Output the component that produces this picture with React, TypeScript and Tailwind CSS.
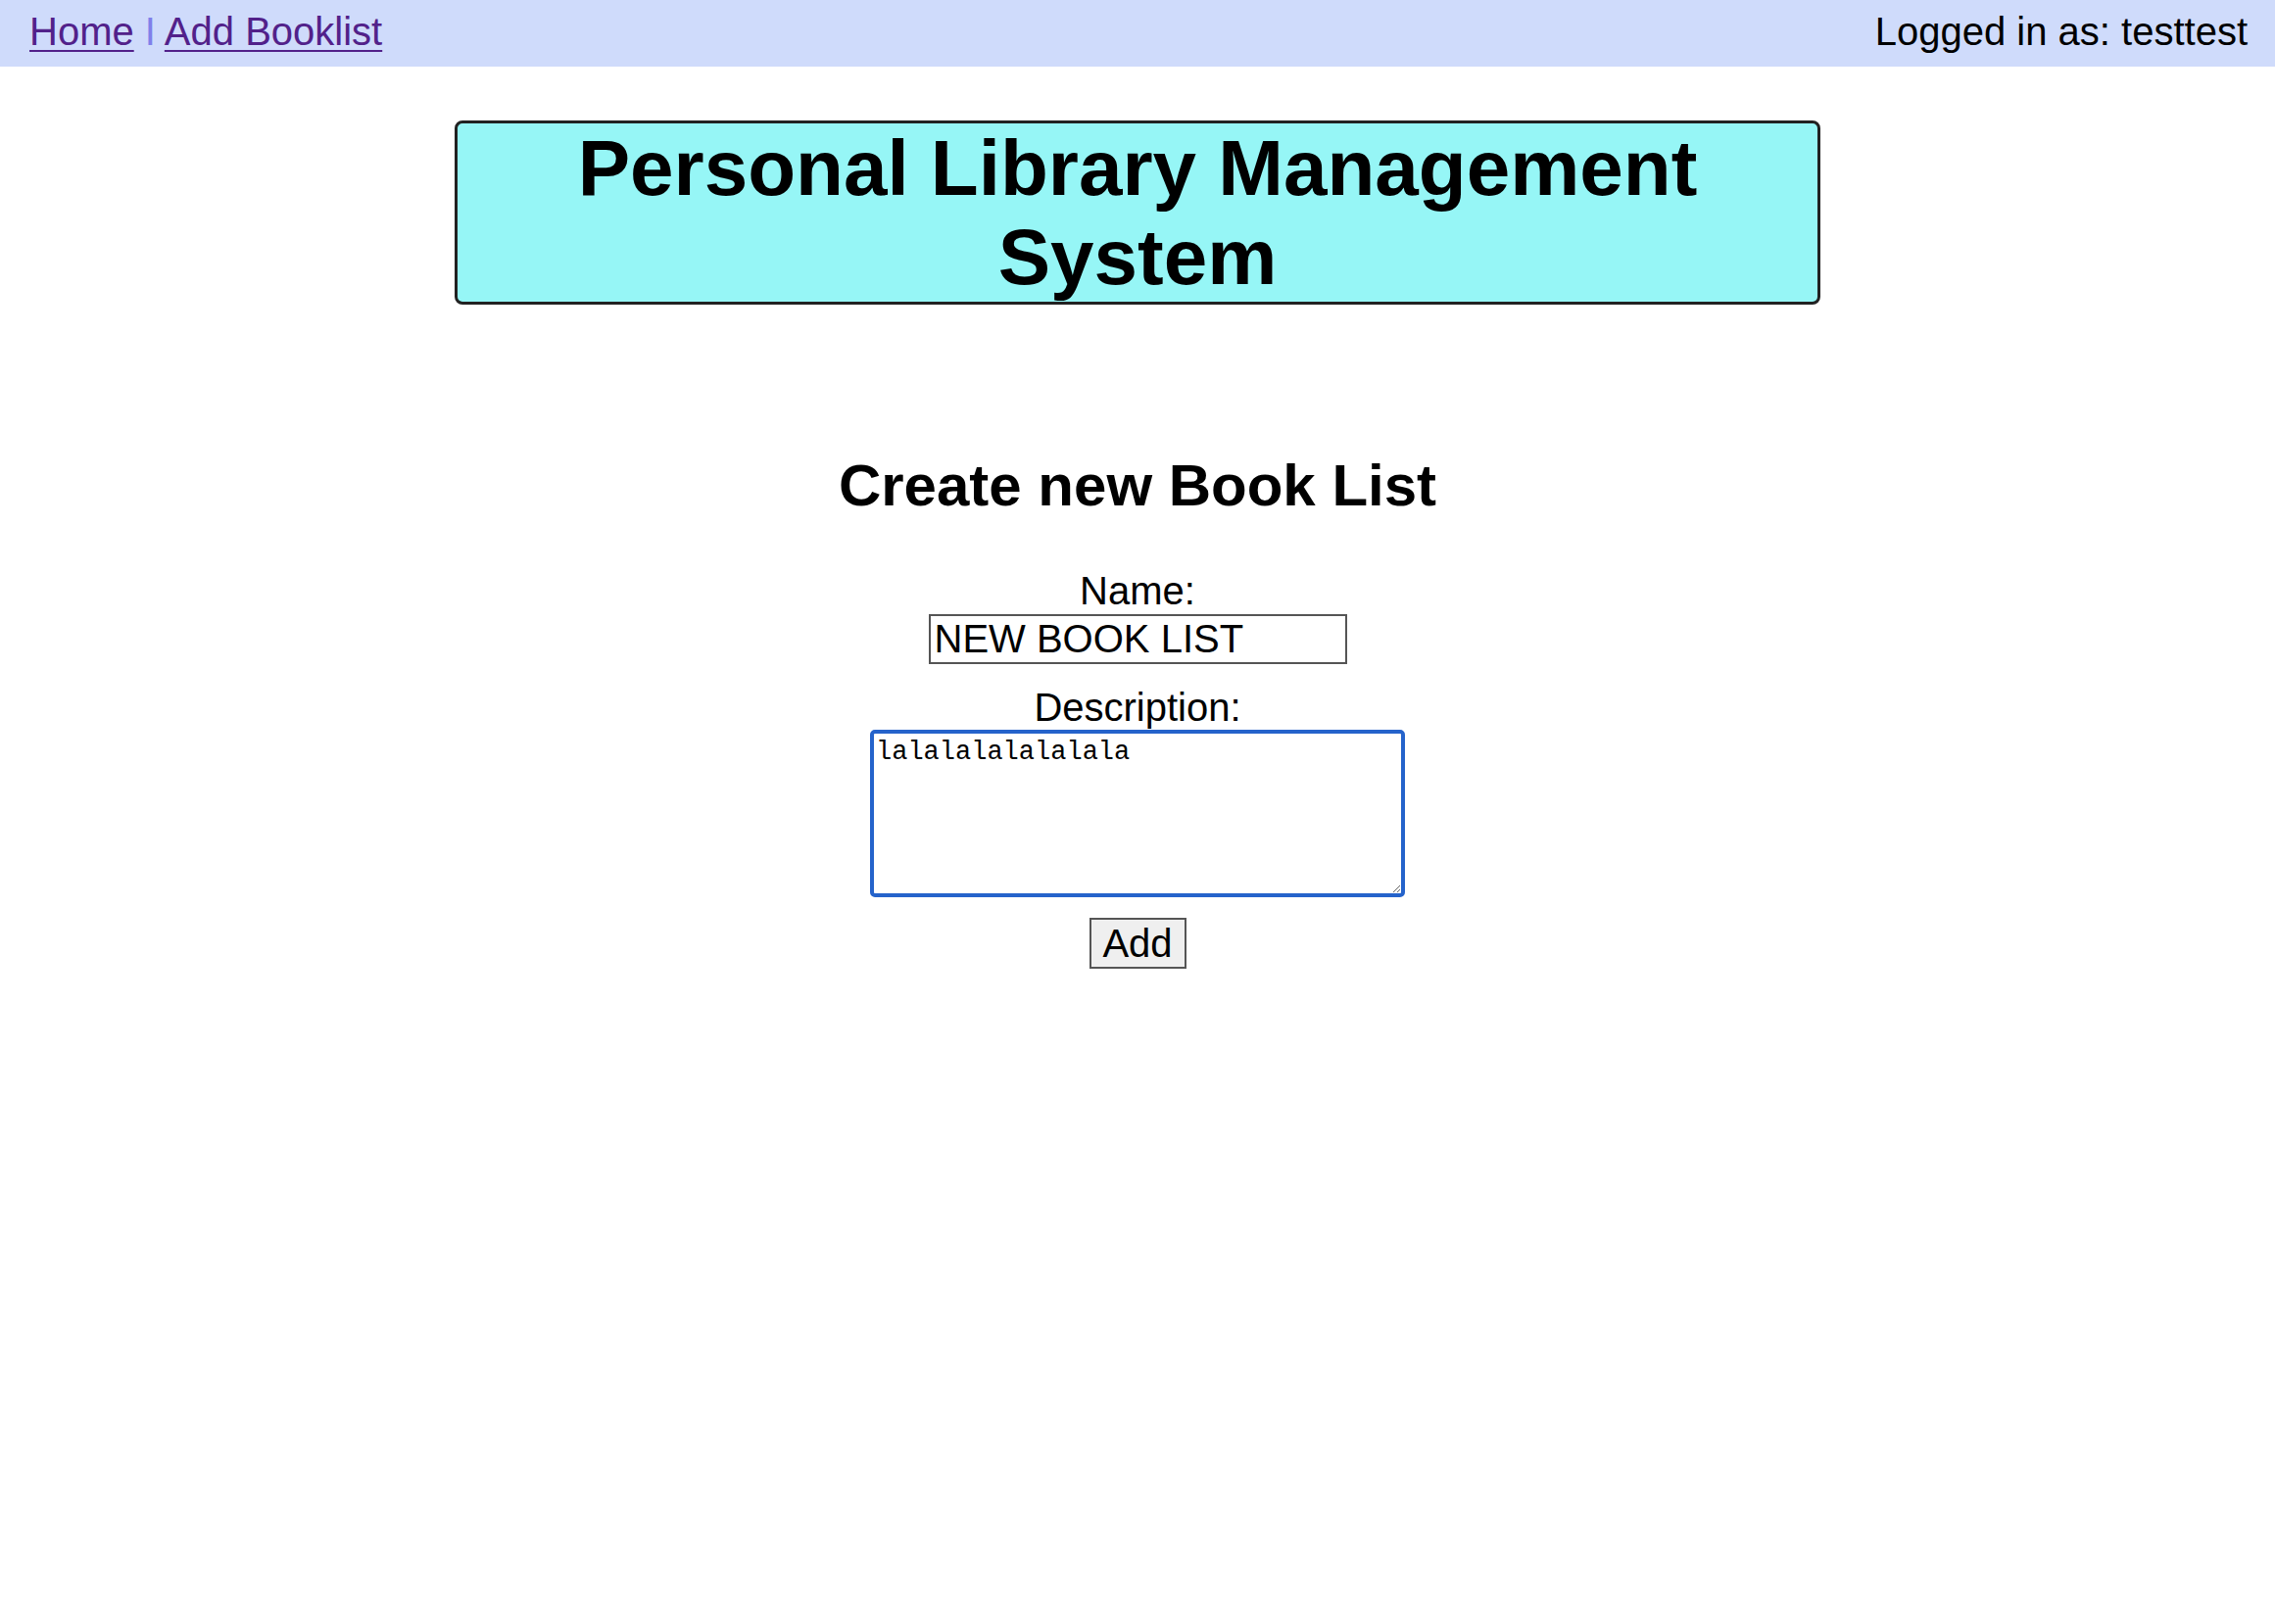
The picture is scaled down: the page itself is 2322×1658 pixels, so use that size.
export default function App() {
  return (
    <div className="min-h-screen bg-white font-['Liberation_Sans',Arial,sans-serif] text-black">
      {/* Top nav */}
      <nav className="flex h-[68px] items-start justify-between bg-[#cfdbfb] pl-[30px] pr-[28px] pt-[9px] text-[40px] leading-[46px]">
        <div>
          <a href="#" className="text-[#52218a] underline decoration-2 underline-offset-[5px]">
            Home
          </a>{" "}
          <span className="text-[#8080ea]">I</span>{" "}
          <a href="#" className="text-[#52218a] underline decoration-2 underline-offset-[5px]">
            Add Booklist
          </a>
        </div>
        <div>Logged in as: testtest</div>
      </nav>

      {/* Title banner */}
      <header className="mx-auto mt-[55px] w-[60%] rounded-[8px] border-[3px] border-[#222] bg-[#96f6f6]">
        <h1 className="text-center text-[80px] font-bold leading-[91px]">
          Personal Library Management System
        </h1>
      </header>

      {/* Form */}
      <main className="mt-[150px] flex flex-col items-center">
        <h2 className="text-[60px] font-bold leading-[69px]">Create new Book List</h2>
        <form className="mt-[50px] flex flex-col items-center text-[40px] leading-[46px]" onSubmit={(e) => e.preventDefault()}>
          <label htmlFor="bl-name">Name:</label>
          <input
            id="bl-name"
            type="text"
            defaultValue="NEW BOOK LIST"
            className="mt-[1px] h-[51px] w-[427px] border-2 border-[#555] bg-white px-[4px] text-[40px] leading-[46px] outline-none"
          />
          <label htmlFor="bl-desc" className="mt-[21px]">
            Description:
          </label>
          <textarea
            id="bl-desc"
            defaultValue="lalalalalalalala"
            className="h-[171px] w-[546px] rounded-[5px] border-4 border-[#2563cb] bg-white px-[2px] pt-[4px] font-['Liberation_Mono','Courier_New',monospace] text-[27px] leading-[30px] outline-none"
          />
          <button
            type="submit"
            className="mt-[21px] h-[52px] w-[99px] border-2 border-[#555] bg-[#efefef] text-[40px] leading-[46px]"
          >
            Add
          </button>
        </form>
      </main>
    </div>
  );
}
